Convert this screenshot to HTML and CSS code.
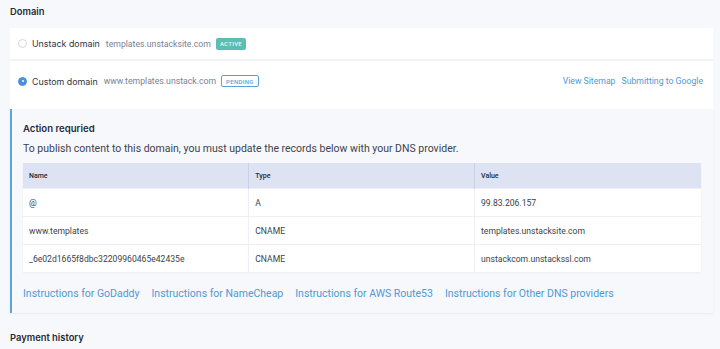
FILE: index.html
```html
<!DOCTYPE html>
<html lang="en">
<head>
    <meta charset="UTF-8">
    <title>Domain settings</title>
    <link rel="stylesheet" href="styles.css">
</head>
<body>
    <h2 class="section-title">Domain</h2>
    <div class="card">
        <div class="domain-row first">
            <span class="radio"></span>
            <span class="domain-label">Unstack domain</span>
            <span class="domain-url">templates.unstacksite.com</span>
            <span class="badge active">ACTIVE</span>
        </div>
        <div class="domain-row second">
            <span class="radio checked"></span>
            <span class="domain-label">Custom domain</span>
            <span class="domain-url">www.templates.unstack.com</span>
            <span class="badge pending">PENDING</span>
            <div class="row-links">
                <a href="#">View Sitemap</a>
                <a href="#">Submitting to Google</a>
            </div>
        </div>
        <div class="action-box">
            <h3>Action requried</h3>
            <p>To publish content to this domain, you must update the records below with your DNS provider.</p>
            <table class="dns-table">
                <thead>
                    <tr><th>Name</th><th>Type</th><th>Value</th></tr>
                </thead>
                <tbody>
                    <tr><td>@</td><td>A</td><td>99.83.206.157</td></tr>
                    <tr><td>www.templates</td><td>CNAME</td><td>templates.unstacksite.com</td></tr>
                    <tr><td>_6e02d1665f8dbc32209960465e42435e</td><td>CNAME</td><td>unstackcom.unstackssl.com</td></tr>
                </tbody>
            </table>
            <div class="instructions">
                <a href="#">Instructions for GoDaddy</a>
                <a href="#">Instructions for NameCheap</a>
                <a href="#">Instructions for AWS Route53</a>
                <a href="#">Instructions for Other DNS providers</a>
            </div>
        </div>
    </div>
    <h2 class="section-title payment">Payment history</h2>
</body>
</html>
```

FILE: styles.css
```css
body {
    font-family: 'Roboto', 'Inter', sans-serif;
    background: #f7f8fc;
    color: #262b36;
    margin: 0;
}
a {
    color: #4a9bd6;
    text-decoration: none;
}
.section-title {
    font-family: 'Inter', sans-serif;
    font-size: 9.4px;
    font-weight: 600;
    margin: 0;
    padding: 6px 10px 0;
    height: 28px;
    box-sizing: border-box;
}
.section-title.payment {
    padding-top: 19px;
    height: auto;
}
.card {
    margin: 0 7px 0 10px;
    background: #fff;
}
.domain-row {
    display: flex;
    align-items: center;
    padding: 0 10px 0 8px;
    font-size: 8.7px;
}
.domain-row.first {
    height: 31px;
    border-bottom: 2px solid #f1f3f7;
}
.domain-row.second {
    box-sizing: border-box;
    height: 48px;
    padding-bottom: 8px;
}
.radio {
    width: 7px;
    height: 7px;
    border: 1px solid #d3d6dc;
    border-radius: 50%;
    margin-right: 5px;
    position: relative;
}
.radio.checked {
    background: #4a90e2;
    border-color: #4a90e2;
}
.radio.checked::after {
    content: "";
    position: absolute;
    left: 2.5px;
    top: 2.5px;
    width: 2px;
    height: 2px;
    border-radius: 50%;
    background: #fff;
}
.domain-label {
    font-family: 'Inter', sans-serif;
    font-size: 8.9px;
    color: #30353f;
    margin-right: 6px;
}
.domain-url {
    color: #7a8196;
    margin-right: 5px;
}
.badge {
    display: inline-flex;
    align-items: center;
    box-sizing: border-box;
    height: 12px;
    font-size: 6px;
    font-weight: 500;
    letter-spacing: 0.3px;
    padding: 0 4px;
    border-radius: 2px;
}
.badge.active {
    background: #5cbdb2;
    color: #e8f7f5;
}
.badge.pending {
    color: #5aa3d8;
    border: 1px solid #5aa3d8;
}
.row-links {
    margin-left: auto;
    display: flex;
    gap: 6px;
}
.action-box {
    background: #f7f8fc;
    border-left: 2px solid #5ba7dd;
    padding: 14px 12px 13px 11px;
    box-shadow: 0 1px 2px rgba(0,0,0,0.06);
}
.action-box h3 {
    font-family: 'Inter', sans-serif;
    font-size: 9.6px;
    font-weight: 600;
    margin: 0 0 8px;
}
.action-box p {
    font-size: 10.5px;
    color: #3d424d;
    margin: 0 0 8px;
}
.dns-table {
    width: 100%;
    border-collapse: collapse;
    background: #fff;
    font-size: 8.6px;
    box-shadow: 0 1px 2px rgba(0,0,0,0.05);
}
.dns-table th {
    background: #dde3f3;
    text-align: left;
    font-weight: 500;
    font-size: 7px;
    height: 25px;
    padding: 0 6px;
    border-right: 1px solid #c9d1e6;
}
.dns-table td {
    height: 27px;
    padding: 0 6px;
    color: #3a3f4a;
    border-top: 1px solid #eef0f5;
    border-right: 1px solid #eef0f5;
}
.dns-table th:last-child,
.dns-table td:last-child {
    border-right: none;
}
.dns-table th:nth-child(1),
.dns-table th:nth-child(2) {
    width: 33.3%;
}
.instructions {
    display: flex;
    gap: 12px;
    margin-top: 15px;
    font-size: 10.5px;
}
```
